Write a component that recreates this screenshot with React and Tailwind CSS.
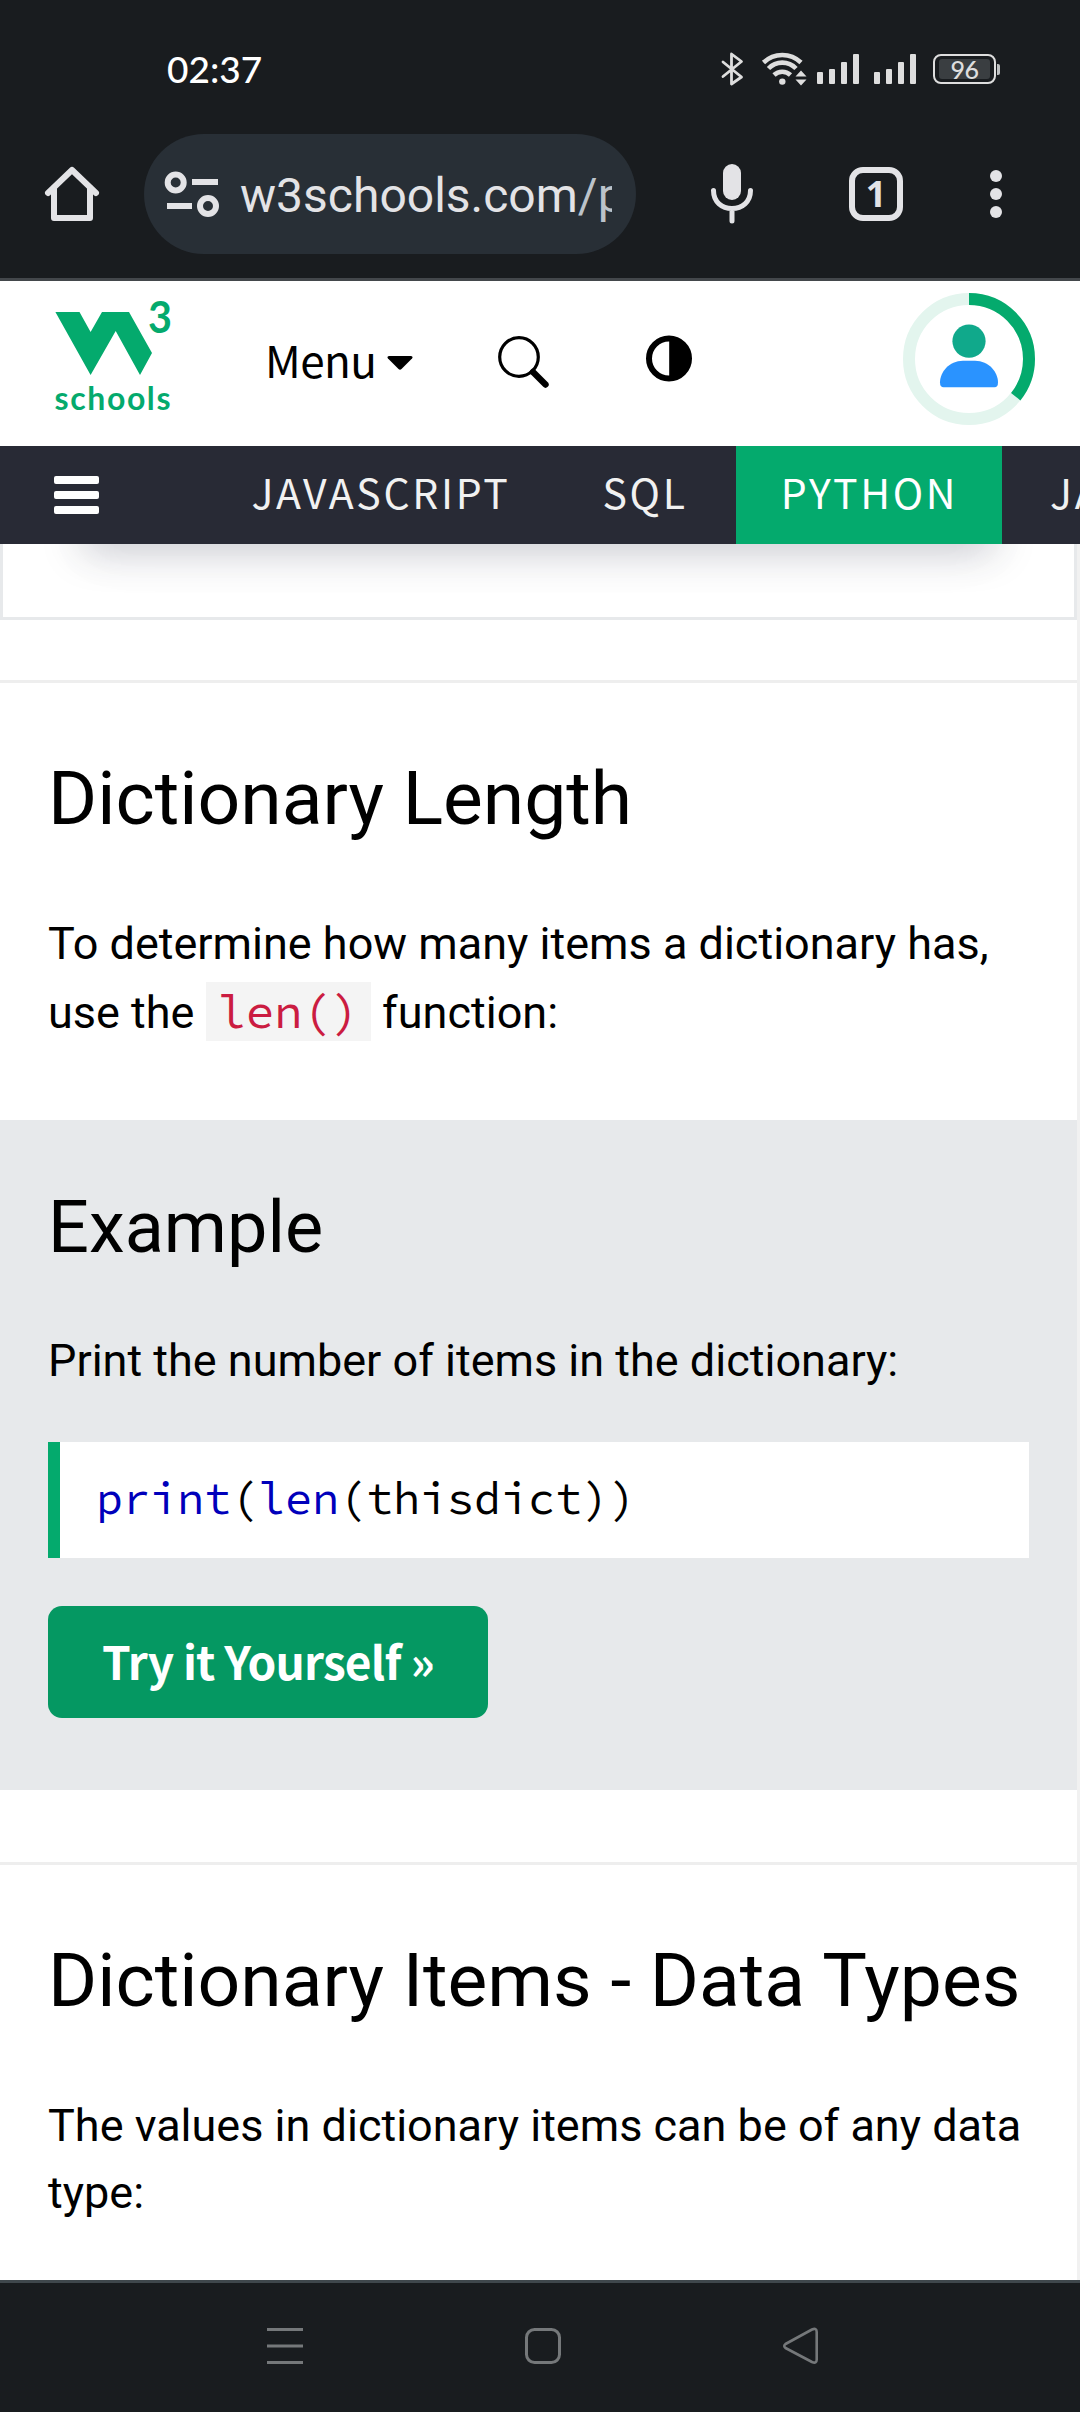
import React from "react";

const SANS = "font-['Noto_Sans_CJK_SC',sans-serif]";
const MONO = "font-['Source_Code_Pro','Noto_Sans_Mono_CJK_SC','Liberation_Mono',monospace]";

function SignalBars() {
  return (
    <div className="flex h-[30px] items-end gap-[6px]">
      <i className="h-[12px] w-[6px] rounded-[1px] bg-[#dedede]" />
      <i className="h-[15px] w-[6px] rounded-[1px] bg-[#dedede]" />
      <i className="h-[22px] w-[6px] rounded-[1px] bg-[#dedede]" />
      <i className="h-[30px] w-[6px] rounded-[1px] bg-[#dedede]" />
    </div>
  );
}

function StatusBar() {
  return (
    <div className="flex h-[134px] items-start pl-[167px] text-white">
      <div className="mt-[47px] w-[553px] font-['Lato',sans-serif] text-[37px] leading-[44px] font-medium">02:37</div>
      <svg className="mt-[51px] h-[36px] w-[24px]" viewBox="0 0 24 36" fill="none" stroke="#dedede" strokeWidth="2.8" strokeLinejoin="round" strokeLinecap="round">
        <path d="M3 11 L21.5 26 L11.5 33 V3 L21.5 10.5 L3 25.5" />
      </svg>
      <svg className="mt-[48px] ml-[17px] h-[40px] w-[48px]" viewBox="0 0 48 40" fill="none" stroke="#dedede" strokeWidth="4.6">
        <path d="M2.5 14.5 A27 27 0 0 1 40 14.5" />
        <path d="M7.5 20.5 A19 19 0 0 1 35 20.5" />
        <path d="M13 27 A12 12 0 0 1 29.5 27" />
        <circle cx="21.3" cy="33.6" r="3.2" fill="#dedede" stroke="none" />
        <path d="M34.5 28.5 L40 22.5 L45.5 28.5 Z M34.5 31.5 L40 37.5 L45.5 31.5 Z" fill="#dedede" stroke="none" />
      </svg>
      <div className="mt-[54px] ml-[8px] flex gap-[15px]">
        <SignalBars />
        <SignalBars />
      </div>
      <div className="mt-[54px] ml-[17px] flex items-center">
        <div className="flex h-[30px] w-[63px] items-center justify-center rounded-[8px] border-2 border-[#dedede] p-[3px]">
          <div className="flex h-[20px] w-[51px] items-center justify-center rounded-[3px] bg-[#3a3e41] font-['Lato',sans-serif] text-[25px] leading-[20px] font-medium tracking-[-0.5px] text-[#dedede]">96</div>
        </div>
        <i className="ml-[1px] h-[11px] w-[3px] rounded-r-[2px] bg-[#bdbfc0]" />
      </div>
    </div>
  );
}

function AddressBar() {
  return (
    <div className="flex h-[120px] items-center">
      <svg className="ml-[42px] h-[60px] w-[60px]" viewBox="0 0 60 60" fill="none" stroke="#e3e3e6" strokeWidth="6" strokeLinecap="round" strokeLinejoin="round">
        <path d="M6 29 L30 6 L54 29" />
        <path d="M12 24 V54 H48 V24" />
      </svg>
      <div className="ml-[42px] flex h-[120px] w-[492px] items-center rounded-full bg-[#282f36]">
        <svg className="ml-[20px] h-[60px] w-[60px]" viewBox="0 0 60 60" fill="none" stroke="#e3e3e6" strokeWidth="6">
          <circle cx="11.7" cy="18.5" r="8" />
          <circle cx="44" cy="42" r="8" />
          <path d="M28 18 H54 M3 42 H28" />
        </svg>
        <div className="ml-[16px] w-[372px] overflow-hidden pt-[3px] font-['Roboto',sans-serif] text-[48px] leading-[60px] whitespace-nowrap text-[#e3e3e6]">
          w3schools.com<span className="text-[#bcc3ca]">/p</span>
        </div>
      </div>
      <svg className="ml-[66px] h-[66px] w-[60px]" viewBox="0 0 60 66" fill="none" stroke="#e3e3e6" strokeWidth="5" strokeLinecap="round">
        <rect x="21" y="3" width="18" height="36" rx="9" fill="#e3e3e6" stroke="none" />
        <path d="M11.5 29.5 C11.5 41 20 47.5 30 47.5 C40 47.5 48.5 41 48.5 29.5 M30 48 V60" />
      </svg>
      <div className="ml-[87px] flex h-[54px] w-[54px] items-center justify-center rounded-[14px] border-[6px] border-[#e3e3e6] font-['Noto_Sans',sans-serif] text-[36px] leading-none font-bold text-[#e3e3e6]">1</div>
      <div className="ml-[87px] flex flex-col gap-[6px]">
        <i className="size-[12px] rounded-full bg-[#e3e3e6]" />
        <i className="size-[12px] rounded-full bg-[#e3e3e6]" />
        <i className="size-[12px] rounded-full bg-[#e3e3e6]" />
      </div>
    </div>
  );
}

function Logo() {
  return (
    <svg className="mt-[9px] ml-[50px] h-[130px] w-[130px]" viewBox="50 290 130 130" fill="#04aa6d">
      <path d="M55.4 312 H79.5 L90.6 332 L102 312 H129 L152 353 L140 375 L115.7 331 L90.6 375 Z" />
      <text x="148" y="332.5" fontFamily="Lato" fontWeight="700" fontSize="43" textLength="24" lengthAdjust="spacingAndGlyphs">3</text>
      <text x="54.5" y="409.5" fontFamily="Lato" fontWeight="700" fontSize="32" textLength="116" lengthAdjust="spacing">schools</text>
    </svg>
  );
}

function SiteHeader() {
  return (
    <header className="flex h-[165px] items-start bg-white">
      <Logo />
      <div className={`mt-[48px] ml-[85px] flex w-[150px] items-center text-[44px] leading-[60px] tracking-[-0.6px] text-black ${SANS}`}>
        <span>Menu</span>
        <svg className="mt-[8px] ml-[11px] h-[14px] w-[26px] shrink-0" viewBox="0 0 26 14">
          <path d="M2 0 H24 Q26.5 0.5 25 2.5 L14.5 13 Q13 14.5 11.5 13 L1 2.5 Q-0.5 0.5 2 0 Z" />
        </svg>
      </div>
      <svg className="mt-[53px] ml-[81px] h-[56px] w-[56px]" viewBox="0 0 56 56" fill="none" stroke="#000">
        <circle cx="23" cy="23" r="19.3" strokeWidth="3.2" />
        <path d="M37 38 L49.5 50.5" strokeWidth="6.4" strokeLinecap="round" />
      </svg>
      <svg className="mt-[54px] ml-[94px] h-[47px] w-[46px]" viewBox="0 0 46 47">
        <circle cx="23" cy="23.5" r="20" fill="none" stroke="#000" strokeWidth="6" />
        <path d="M23.2 3 A20 20.5 0 0 1 23.2 44 Z" />
      </svg>
      <svg className="mt-[12px] ml-[211px] h-[132px] w-[132px]" viewBox="0 0 132 132" fill="none">
        <circle cx="66" cy="66" r="60" stroke="#e3f5ee" strokeWidth="12" />
        <circle cx="66" cy="66" r="60" stroke="#04aa6d" strokeWidth="12" pathLength="100" strokeDasharray="35.8 100" transform="rotate(-90 66 66)" />
        <circle cx="66" cy="48.2" r="16.6" fill="#10a98b" />
        <path d="M60 67.7 H72 C86 68 95 79 95 89.5 Q95 94.3 91.5 94.3 H40.5 Q37 94.3 37 89.5 C37 79 46 68 60 67.7 Z" fill="#2a93ff" />
      </svg>
    </header>
  );
}

function TopicNav() {
  return (
    <nav className={`flex h-[98px] items-stretch overflow-hidden bg-[#282a35] text-[41px] leading-[60px] tracking-[2.7px] whitespace-nowrap text-[#f1f1f1] ${SANS}`}>
      <div className="flex w-[206px] shrink-0 flex-col justify-center gap-[7px] pl-[54px]">
        <i className="h-[8px] w-[45px] rounded-[2px] bg-white" />
        <i className="h-[8px] w-[45px] rounded-[2px] bg-white" />
        <i className="h-[8px] w-[45px] rounded-[2px] bg-white" />
      </div>
      <div className="flex w-[350px] shrink-0 items-center justify-center pb-[8px]">JAVASCRIPT</div>
      <div className="flex w-[180px] shrink-0 items-center justify-center pr-[2px] pb-[8px]">SQL</div>
      <div className="flex w-[266px] shrink-0 items-center justify-center bg-[#04aa6d] pb-[8px] pl-[1px] text-white">PYTHON</div>
      <div className="flex shrink-0 items-center pb-[8px] pl-[48px]">JA</div>
    </nav>
  );
}

function Example() {
  return (
    <div className="mt-[74px] flex h-[670px] flex-col items-start bg-[#e7e9eb] pt-[58px] pr-[48px] pl-[48px]">
      <h3 className="text-[72px] leading-[100px]">Example</h3>
      <p className="mt-[49px] leading-[68px]">Print the number of items in the dictionary:</p>
      <div className={`mt-[47px] flex h-[116px] w-full items-center border-l-[12px] border-[#04aa6d] bg-white pb-[4px] pl-[36px] text-[45px] leading-[68px] ${MONO}`}>
        <div>
          <span className="text-[#0000bb]">print</span>(<span className="text-[#0000bb]">len</span>(thisdict))
        </div>
      </div>
      <button className={`mt-[48px] h-[112px] w-[440px] rounded-[14px] bg-[#059862] pb-[4px] text-[46px] leading-[60px] font-bold tracking-[-0.8px] whitespace-nowrap text-white ${SANS}`}>
        Try it Yourself »
      </button>
    </div>
  );
}

function Article() {
  return (
    <main className="h-[1736px] w-full overflow-hidden border-r-[3px] border-[#f1f1f1] bg-white font-['Roboto',sans-serif] text-[45px] text-black">
      <div className="h-[76px] overflow-hidden border-x-[3px] border-b-[3px] border-[#e7e9eb] px-[80px]">
        <div className="-mt-[40px] h-[40px] shadow-[0_10px_60px_0_rgba(50,50,93,0.04),0_6px_40px_0_rgba(40,42,64,0.25)]" />
      </div>
      <hr className="mt-[60px] border-t-[3px] border-[#eeeeee]" />
      <h2 className="mt-[65px] ml-[48px] text-[75px] leading-[100px]">Dictionary Length</h2>
      <p className="mt-[61px] ml-[48px] h-[137px] leading-[69px] whitespace-nowrap">
        To determine how many items a dictionary has,
        <br />
        use the <code className={`bg-[#f4f4f4] px-[11.8px] text-[47.25px] leading-[47px] text-[#cb1c41] ${MONO}`}>len()</code> function:
      </p>
      <Example />
      <hr className="mt-[72px] border-t-[3px] border-[#eeeeee]" />
      <h2 className="mt-[65px] ml-[48px] text-[75px] leading-[100px] whitespace-nowrap">Dictionary Items - Data Types</h2>
      <p className="mt-[62px] ml-[48px] leading-[67px] whitespace-nowrap">
        The values in dictionary items can be of any data
        <br />
        type:
      </p>
    </main>
  );
}

function SystemNav() {
  return (
    <footer className="flex h-[132px] items-start border-t-[3px] border-[#3f474c] bg-[#191c1f] pt-[42px]">
      <svg className="ml-[265px] h-[42px] w-[40px]" viewBox="0 0 40 42" stroke="#75787a" strokeWidth="3">
        <path d="M2 4.5 H38 M2 21 H38 M2 37.5 H38" />
      </svg>
      <svg className="ml-[218px] h-[42px] w-[40px]" viewBox="0 0 40 42" fill="none" stroke="#75787a" strokeWidth="3">
        <rect x="3.5" y="4.5" width="33" height="33" rx="8" />
      </svg>
      <svg className="ml-[218px] h-[42px] w-[40px]" viewBox="0 0 40 42" fill="none" stroke="#75787a" strokeWidth="2.6" strokeLinejoin="round">
        <path d="M4.5 19 L31 4.5 Q35.7 2.5 35.7 7 V34.5 Q35.7 39 31 37 L4.5 23 Q2 21 4.5 19 Z" />
      </svg>
    </footer>
  );
}

export default function App() {
  return (
    <div className="flex h-[2412px] w-[1080px] flex-col overflow-hidden bg-white">
      <div className="h-[281px] border-b-[3px] border-[#43474b] bg-[#191c1f]">
        <StatusBar />
        <AddressBar />
      </div>
      <SiteHeader />
      <TopicNav />
      <Article />
      <SystemNav />
    </div>
  );
}
